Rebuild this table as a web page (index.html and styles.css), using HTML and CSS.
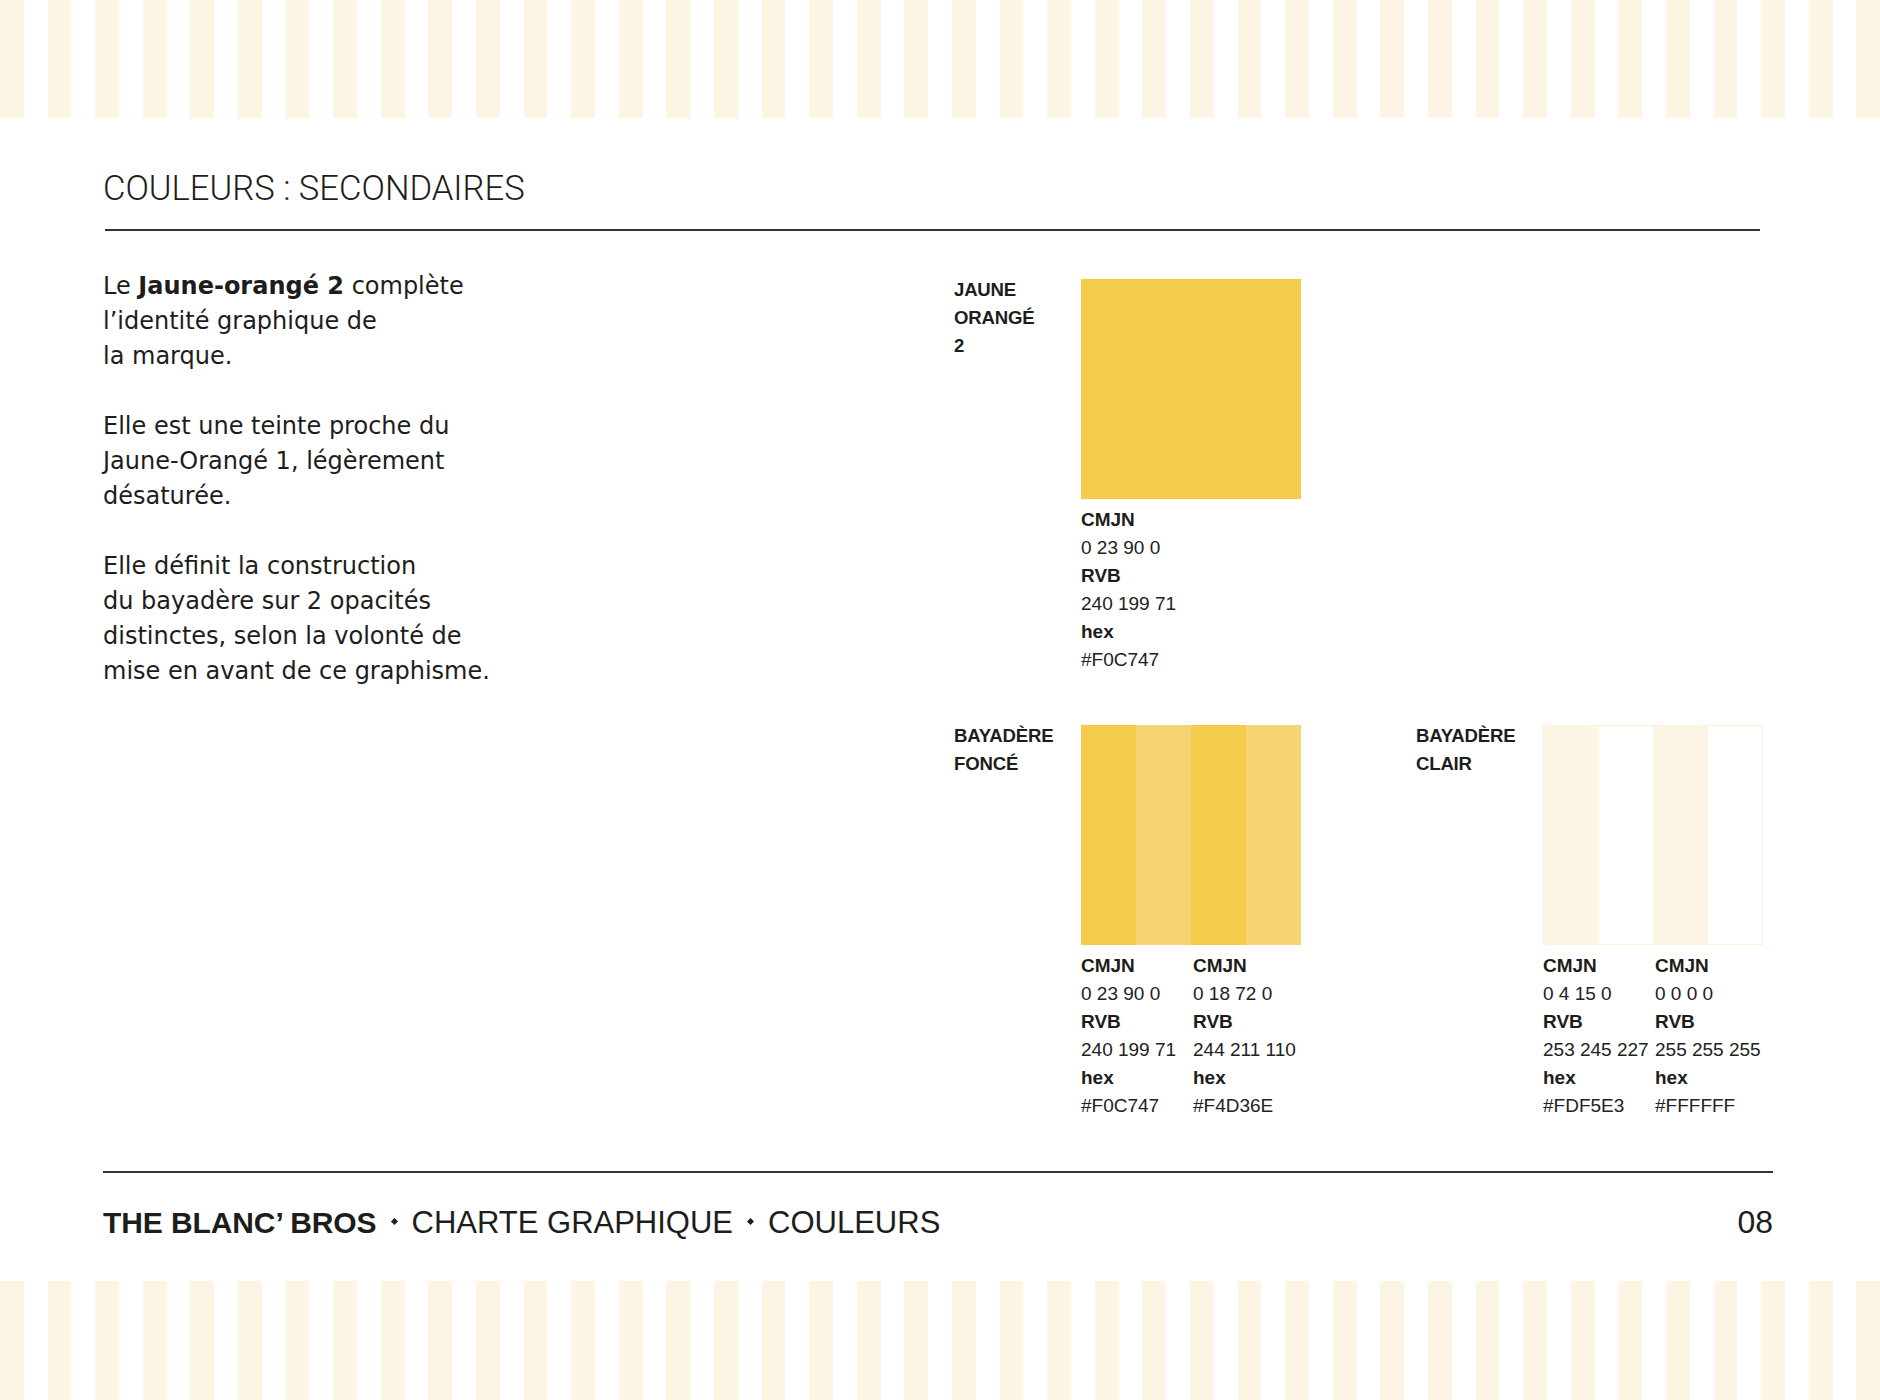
FILE: index.html
```html
<!DOCTYPE html>
<html lang="fr">
<head>
<meta charset="utf-8">
<title>Couleurs : secondaires</title>
<link rel="stylesheet" href="styles.css">
</head>
<body>
<div class="page">
  <div class="stripes stripes-top"></div>

  <header class="head">
    <h1 class="title">COULEURS : SECONDAIRES</h1>
    <div class="rule rule-head"></div>
  </header>

  <main class="content">
    <section class="intro">
      <p>Le <strong>Jaune-orangé 2</strong> complète<br>l’identité graphique de<br>la marque.</p>
      <p>Elle est une teinte proche du<br>Jaune-Orangé 1, légèrement<br>désaturée.</p>
      <p>Elle définit la construction<br>du bayadère sur 2 opacités<br>distinctes, selon la volonté de<br>mise en avant de ce graphisme.</p>
    </section>

    <section class="palette">
      <h2 class="label">JAUNE<br>ORANGÉ<br>2</h2>
      <div class="chip">
        <div class="swatch swatch-solid"></div>
        <div class="specs">
          <dl class="spec">
            <dt>CMJN</dt><dd>0 23 90 0</dd>
            <dt>RVB</dt><dd>240 199 71</dd>
            <dt>hex</dt><dd>#F0C747</dd>
          </dl>
        </div>
      </div>

      <h2 class="label">BAYADÈRE<br>FONCÉ</h2>
      <div class="chip">
        <div class="swatch swatch-stripes">
          <span class="band band-dark"></span>
          <span class="band band-mid"></span>
          <span class="band band-dark"></span>
          <span class="band band-mid"></span>
        </div>
        <div class="specs">
          <dl class="spec">
            <dt>CMJN</dt><dd>0 23 90 0</dd>
            <dt>RVB</dt><dd>240 199 71</dd>
            <dt>hex</dt><dd>#F0C747</dd>
          </dl>
          <dl class="spec">
            <dt>CMJN</dt><dd>0 18 72 0</dd>
            <dt>RVB</dt><dd>244 211 110</dd>
            <dt>hex</dt><dd>#F4D36E</dd>
          </dl>
        </div>
      </div>

      <h2 class="label label-alt">BAYADÈRE<br>CLAIR</h2>
      <div class="chip">
        <div class="swatch swatch-stripes swatch-light">
          <span class="band band-cream"></span>
          <span class="band band-white"></span>
          <span class="band band-cream"></span>
          <span class="band band-white"></span>
        </div>
        <div class="specs">
          <dl class="spec">
            <dt>CMJN</dt><dd>0 4 15 0</dd>
            <dt>RVB</dt><dd>253 245 227</dd>
            <dt>hex</dt><dd>#FDF5E3</dd>
          </dl>
          <dl class="spec">
            <dt>CMJN</dt><dd>0 0 0 0</dd>
            <dt>RVB</dt><dd>255 255 255</dd>
            <dt>hex</dt><dd>#FFFFFF</dd>
          </dl>
        </div>
      </div>
    </section>
  </main>

  <footer class="foot">
    <div class="rule rule-foot"></div>
    <div class="foot-line">
      <p class="foot-title"><strong class="brand">THE BLANC’ BROS</strong><span class="dot"></span>CHARTE GRAPHIQUE<span class="dot"></span>COULEURS</p>
      <span class="page-num">08</span>
    </div>
  </footer>

  <div class="stripes stripes-bottom"></div>
</div>
</body>
</html>
```

FILE: styles.css
```css
* { box-sizing: border-box; }

html, body {
  margin: 0;
  padding: 0;
  background: #ffffff;
}

body {
  color: #1d1d1b;
  font-family: "Liberation Sans", Arial, sans-serif;
}

.page {
  width: 1880px;
  height: 1400px;
  overflow: hidden;
}

/* Bayadère stripes */
.stripes {
  background: repeating-linear-gradient(
    to right,
    #fdf5e3 0,
    #fdf5e3 23.8px,
    #ffffff 23.8px,
    #ffffff 47.6px
  );
}

.stripes-top { height: 118px; }

.stripes-bottom {
  height: 120px;
  margin-top: 40px;
}

/* Header */
.head {
  padding: 50px 0 0 103px;
}

.title {
  margin: 0;
  font-family: Roboto, "Liberation Sans", sans-serif;
  font-weight: 300;
  font-size: 34.6px;
  line-height: 40px;
  color: #1d1d1b;
}

.rule {
  height: 2px;
  background: #333333;
}

.rule-head {
  margin: 21px 0 0 2px;
  width: 1655px;
}

/* Content */
.content {
  display: flex;
  padding: 38px 0 0 103px;
}

.intro {
  width: 851px;
  flex: none;
  font-family: "DejaVu Sans", sans-serif;
  font-size: 24px;
  line-height: 35px;
}

.intro p {
  margin: 0 0 35px;
}

.intro strong { font-weight: 700; }

.palette {
  display: grid;
  grid-template-columns: 127px 220px 115px 127px 220px;
  row-gap: 48px;
  align-items: start;
  padding-top: 7px;
}

.label {
  grid-column: 1;
  margin: 0;
  font-family: "Liberation Sans", Arial, sans-serif;
  font-weight: 700;
  font-size: 18.6px;
  line-height: 28px;
  letter-spacing: -0.2px;
  color: #1d1d1b;
}

.label-alt { grid-column: 4; }

.chip { width: 220px; }

.swatch {
  width: 220px;
  height: 220px;
  margin-top: 3px;
}

.swatch-solid { background: #f5cb4c; }

.swatch-stripes { display: flex; }

.band { flex: 1; }

.band-dark { background: #f5cb4c; }
.band-mid { background: #f6d472; }
.band-cream { background: #fdf5e3; }
.band-white { background: #ffffff; }

.swatch-light {
  border: 1px solid #fcf2dc;
}

.specs {
  display: flex;
  margin-top: 7px;
}

.spec {
  width: 112px;
  flex: none;
  margin: 0;
  font-size: 19px;
  line-height: 28px;
  white-space: nowrap;
}

.spec dt {
  font-weight: 700;
}

.spec dd {
  margin: 0;
  font-weight: 400;
  color: #222222;
}

/* Footer */
.foot {
  margin-top: 51px;
  padding-left: 103px;
}

.rule-foot { width: 1670px; }

.foot-line {
  width: 1670px;
  display: flex;
  justify-content: space-between;
  align-items: baseline;
  margin-top: 31px;
  font-size: 31px;
  line-height: 36px;
}

.foot-title {
  margin: 0;
  font-weight: 400;
}

.brand {
  font-weight: 700;
  font-size: 30px;
  letter-spacing: -0.1px;
}

.dot {
  display: inline-block;
  width: 5px;
  height: 5px;
  margin: 0 15px;
  background: #1d1d1b;
  transform: rotate(45deg);
  vertical-align: 9px;
}

.page-num {
  font-weight: 400;
  font-size: 32px;
}
```
